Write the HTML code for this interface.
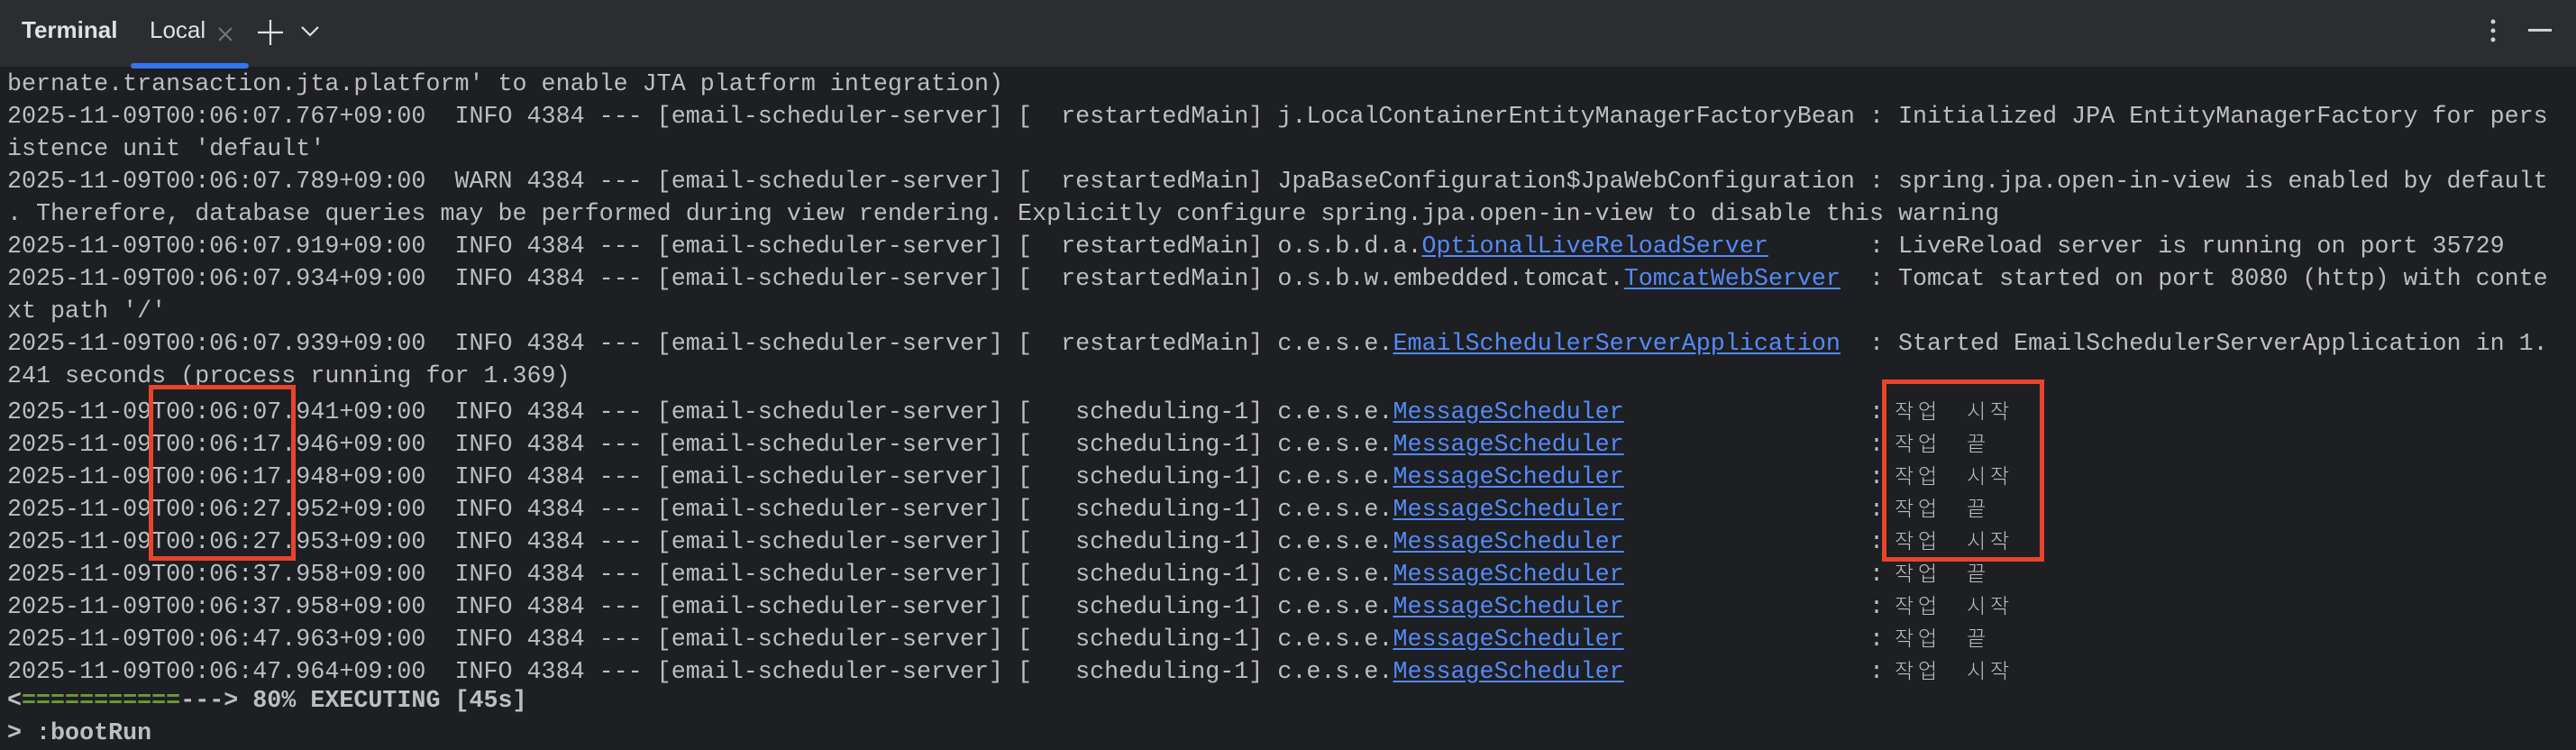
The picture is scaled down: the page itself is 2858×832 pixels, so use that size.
<!DOCTYPE html>
<html><head><meta charset="utf-8"><style>
html,body{margin:0;padding:0;width:2858px;height:830px;overflow:hidden;background:#1e1f22}
.hdr{position:absolute;left:0;top:0;width:2858px;height:74px;background:#2b2d30}
.hdr .t{position:absolute;left:24px;top:18px;font:bold 26px "Liberation Sans",sans-serif;color:#dfe1e5}
.hdr .l{position:absolute;left:166px;top:18px;font:26px "Liberation Sans",sans-serif;color:#dfe1e5}
.ul{position:absolute;left:145px;top:70px;width:131px;height:6px;border-radius:3px;background:#3574f0}
.body{position:absolute;left:8px;top:76px;font-family:"Liberation Mono","NanumGothic",monospace;font-size:26.7px;line-height:36px;color:#bcbec4;white-space:normal}
.body div{height:36px;white-space:pre}
a{color:#548af7;text-decoration:underline;text-underline-offset:3px}
.g{color:#6a9a3a}
.k{font-family:"Noto Sans CJK KR",sans-serif;font-size:23px;font-weight:300;margin-left:12px}
.k b{display:inline-block;width:26px;font-weight:300}
.k i{display:inline-block;width:28px}
.box{position:absolute;border:5px solid #e8442b;box-sizing:border-box}
</style></head><body>
<div class="hdr">
<div class="t">Terminal</div>
<div class="l">Local</div>
<svg style="position:absolute;left:240px;top:28px" width="20" height="20"><path d="M3 3L17 17M17 3L3 17" stroke="#6f737a" stroke-width="2.2"/></svg>
<svg style="position:absolute;left:284px;top:20px" width="32" height="32"><path d="M16 2V30M2 16H30" stroke="#dfe1e5" stroke-width="2.2"/></svg>
<svg style="position:absolute;left:333px;top:26px" width="22" height="16"><path d="M2 4L11 13L20 4" stroke="#dfe1e5" stroke-width="2.2" fill="none"/></svg>
<svg style="position:absolute;left:2760px;top:20px" width="14" height="30"><circle cx="6" cy="4" r="2.5" fill="#ced0d6"/><circle cx="6" cy="14" r="2.5" fill="#ced0d6"/><circle cx="6" cy="24" r="2.5" fill="#ced0d6"/></svg>
<div style="position:absolute;left:2805px;top:32px;width:26px;height:3px;background:#ced0d6"></div>
</div>
<div class="ul"></div>
<div class="body"><div>bernate.transaction.jta.platform' to enable JTA platform integration)</div><div>2025-11-09T00:06:07.767+09:00  INFO 4384 --- [email-scheduler-server] [  restartedMain] j.LocalContainerEntityManagerFactoryBean : Initialized JPA EntityManagerFactory for pers</div><div>istence unit 'default'</div><div>2025-11-09T00:06:07.789+09:00  WARN 4384 --- [email-scheduler-server] [  restartedMain] JpaBaseConfiguration$JpaWebConfiguration : spring.jpa.open-in-view is enabled by default</div><div>. Therefore, database queries may be performed during view rendering. Explicitly configure spring.jpa.open-in-view to disable this warning</div><div>2025-11-09T00:06:07.919+09:00  INFO 4384 --- [email-scheduler-server] [  restartedMain] o.s.b.d.a.<a>OptionalLiveReloadServer</a>       : LiveReload server is running on port 35729</div><div>2025-11-09T00:06:07.934+09:00  INFO 4384 --- [email-scheduler-server] [  restartedMain] o.s.b.w.embedded.tomcat.<a>TomcatWebServer</a>  : Tomcat started on port 8080 (http) with conte</div><div>xt path '/'</div><div>2025-11-09T00:06:07.939+09:00  INFO 4384 --- [email-scheduler-server] [  restartedMain] c.e.s.e.<a>EmailSchedulerServerApplication</a>  : Started EmailSchedulerServerApplication in 1.</div><div>241 seconds (process running for 1.369)</div><div>2025-11-09T00:06:07.941+09:00  INFO 4384 --- [email-scheduler-server] [   scheduling-1] c.e.s.e.<a>MessageScheduler</a>                 :<span class="k"><b>작</b><b>업</b><i></i><b>시</b><b>작</b></span></div><div>2025-11-09T00:06:17.946+09:00  INFO 4384 --- [email-scheduler-server] [   scheduling-1] c.e.s.e.<a>MessageScheduler</a>                 :<span class="k"><b>작</b><b>업</b><i></i><b>끝</b></span></div><div>2025-11-09T00:06:17.948+09:00  INFO 4384 --- [email-scheduler-server] [   scheduling-1] c.e.s.e.<a>MessageScheduler</a>                 :<span class="k"><b>작</b><b>업</b><i></i><b>시</b><b>작</b></span></div><div>2025-11-09T00:06:27.952+09:00  INFO 4384 --- [email-scheduler-server] [   scheduling-1] c.e.s.e.<a>MessageScheduler</a>                 :<span class="k"><b>작</b><b>업</b><i></i><b>끝</b></span></div><div>2025-11-09T00:06:27.953+09:00  INFO 4384 --- [email-scheduler-server] [   scheduling-1] c.e.s.e.<a>MessageScheduler</a>                 :<span class="k"><b>작</b><b>업</b><i></i><b>시</b><b>작</b></span></div><div>2025-11-09T00:06:37.958+09:00  INFO 4384 --- [email-scheduler-server] [   scheduling-1] c.e.s.e.<a>MessageScheduler</a>                 :<span class="k"><b>작</b><b>업</b><i></i><b>끝</b></span></div><div>2025-11-09T00:06:37.958+09:00  INFO 4384 --- [email-scheduler-server] [   scheduling-1] c.e.s.e.<a>MessageScheduler</a>                 :<span class="k"><b>작</b><b>업</b><i></i><b>시</b><b>작</b></span></div><div>2025-11-09T00:06:47.963+09:00  INFO 4384 --- [email-scheduler-server] [   scheduling-1] c.e.s.e.<a>MessageScheduler</a>                 :<span class="k"><b>작</b><b>업</b><i></i><b>끝</b></span></div><div>2025-11-09T00:06:47.964+09:00  INFO 4384 --- [email-scheduler-server] [   scheduling-1] c.e.s.e.<a>MessageScheduler</a>                 :<span class="k"><b>작</b><b>업</b><i></i><b>시</b><b>작</b></span></div><div style="font-weight:bold">&lt;<span class="g">===========</span>---&gt; 80% EXECUTING [45s]</div><div style="font-weight:bold">&gt; :bootRun</div></div>
<div class="box" style="left:165px;top:427px;width:163px;height:195px"></div>
<div class="box" style="left:2088px;top:421px;width:180px;height:202px"></div>
</body></html>
